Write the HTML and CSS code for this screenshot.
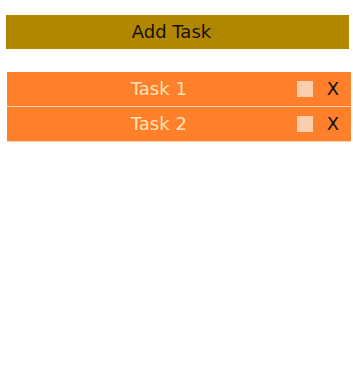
FILE: index.html
```html
<!DOCTYPE html>
<html>
<head>
<meta charset="utf-8">
<link rel="stylesheet" href="styles.css">
</head>
<body>
<div class="app">
  <button class="add-btn">Add Task</button>
  <ul class="tasks">
    <li class="task"><span class="label">Task 1</span><span class="check"></span><span class="del">X</span></li>
    <li class="task"><span class="label">Task 2</span><span class="check"></span><span class="del">X</span></li>
  </ul>
</div>
</body>
</html>
```
FILE: styles.css
```css
html, body {
  margin: 0;
  padding: 0;
  background: #ffffff;
  font-family: "DejaVu Sans", Verdana, sans-serif;
}
.app {
  padding: 15px 0 0 6px;
  width: 345px;
}
.add-btn {
  display: block;
  width: 343px;
  height: 34px;
  margin: 0;
  padding: 0 12px 2px 0;
  border: none;
  background: #b08800;
  color: #1a1000;
  font-family: "DejaVu Sans", Verdana, sans-serif;
  font-size: 18px;
}
.tasks {
  list-style: none;
  margin: 23px 0 0 1px;
  padding: 0;
  width: 344px;
}
.task {
  display: flex;
  align-items: center;
  height: 34px;
  background: #ff7f2a;
  border-bottom: 1px solid #fcd3ac;
  font-size: 18px;
}
.label {
  flex: 1;
  text-align: center;
  color: #fde3b5;
  padding: 0 0 2px 14px;
}
.check {
  width: 16px;
  height: 16px;
  background: #fdcdb0;
  margin: 0 14px 1px 0;
}
.del {
  color: #111;
  padding: 0 12px 2px 0;
}
```
